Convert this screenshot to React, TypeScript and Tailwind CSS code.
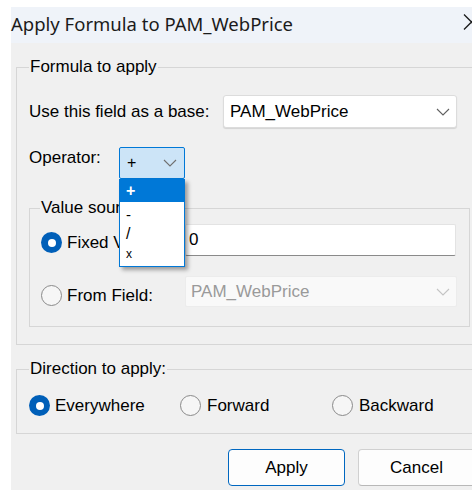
import React from "react";

function Chevron({ color = "#606060" }: { color?: string }) {
  return (
    <svg width="14" height="8" viewBox="0 0 14 8" fill="none">
      <path d="M1 1 L7 7 L13 1" stroke={color} strokeWidth="1.1" />
    </svg>
  );
}

function Radio({ checked }: { checked: boolean }) {
  if (checked) {
    return (
      <span className="w-[21px] h-[21px] rounded-full bg-[#005fb8] flex items-center justify-center shrink-0">
        <span className="w-[8px] h-[8px] rounded-full bg-white" />
      </span>
    );
  }
  return (
    <span className="w-[21px] h-[21px] rounded-full border border-[#8a8a8a] bg-[#f6f6f6] shrink-0" />
  );
}

export default function App() {
  return (
    <div className="w-[472px] h-[490px] bg-white overflow-hidden font-['Liberation_Sans',Arial,sans-serif] text-[17px] text-black">
      <div className="ml-[11px] mt-[7px] w-[480px] h-[483px] bg-[#f0f0f0]">
        {/* title bar */}
        <div className="h-[36px] bg-[#eff3f9] flex items-center relative">
          <span className="font-['Noto_Sans',sans-serif] text-[18.5px] text-[#1b1b1b] leading-none pb-[1px]">
            Apply Formula to PAM_WebPrice
          </span>
          <svg
            className="absolute left-[451px] top-[7px]"
            width="20"
            height="16"
            viewBox="0 0 20 16"
            fill="none"
          >
            <path d="M2 0.5 L17 15.5 M17 0.5 L2 15.5" stroke="#1b1b1b" strokeWidth="1.3" />
          </svg>
        </div>

        <div className="pl-[5px]">
          {/* Formula to apply */}
          <fieldset className="mt-[15px] w-[470px] border border-[#d6d6d6] pl-[12px] pb-[17px]">
            <legend className="px-[1px] leading-[18px]">Formula to apply</legend>
            <div className="mt-[19px] h-[33px] flex items-center">
              <span className="w-[194px]">Use this field as a base:</span>
              <div className="w-[234px] h-[33px] bg-white border border-[#dcdcdc] rounded-[3px] shadow-[0_1px_1px_rgba(0,0,0,0.12)] flex items-center justify-between pl-[6px] pr-[6px]">
                <span>PAM_WebPrice</span>
                <Chevron />
              </div>
            </div>

            <div className="mt-[19px] h-[32px] flex items-start">
              <span className="w-[90px] pt-[2px] leading-[18px]">Operator:</span>
              <div className="relative z-10">
                <div className="w-[66px] h-[32px] bg-[#cce4f7] border border-[#0078d7] rounded-[2px] flex items-center justify-between pl-[7px] pr-[7px]">
                  <span className="text-[16px]">+</span>
                  <Chevron color="#707070" />
                </div>
                <div className="absolute left-0 top-[32px] w-[66px] h-[88px] bg-white border border-[#0078d7] shadow-[3px_3px_4px_rgba(0,0,0,0.35)] flex flex-col">
                  <div className="h-[22px] bg-[#0078d7] text-white font-bold flex items-center pl-[6px] text-[16px]">+</div>
                  <div className="h-[21px] flex items-center pl-[6px] text-[15px] pt-[5px]">-</div>
                  <div className="h-[21px] flex items-center pl-[6px] text-[16px]">/</div>
                  <div className="h-[22px] flex items-center pl-[6px] text-[12px] pb-[3px]">x</div>
                </div>
              </div>
            </div>

            {/* Value source */}
            <fieldset className="mt-[20px] w-[441px] border border-[#d6d6d6] pl-[10px] pb-[19px]">
              <legend className="px-[1px] leading-[18px]">Value source:</legend>
              <div className="mt-[7px] h-[32px] flex items-center">
                <div className="w-[145px] flex items-center gap-[5px] pl-[1px] pt-[5px]">
                  <Radio checked />
                  <span>Fixed Value:</span>
                </div>
                <div className="w-[271px] h-[32px] bg-white border border-[#e3e3e3] border-b-[#8a8a8a] rounded-[2px] flex items-center pl-[3px]">
                  <span>0</span>
                </div>
              </div>
              <div className="mt-[20px] h-[31px] flex items-center">
                <div className="w-[145px] flex items-center gap-[5px] pl-[1px] pt-[8px]">
                  <Radio checked={false} />
                  <span>From Field:</span>
                </div>
                <div className="w-[272px] h-[31px] bg-[#f9f9f9] border border-[#ececec] rounded-[2px] flex items-center justify-between pl-[5px] pr-[6px] text-[#9a9a9a]">
                  <span>PAM_WebPrice</span>
                  <Chevron color="#c4c4c4" />
                </div>
              </div>
            </fieldset>
          </fieldset>

          {/* Direction to apply */}
          <fieldset className="mt-[15px] w-[470px] border border-[#d6d6d6] pl-[12px] pb-[17px]">
            <legend className="px-[1px] leading-[18px]">Direction to apply:</legend>
            <div className="mt-[17px] h-[21px] flex items-center">
              <div className="w-[151px] flex items-center gap-[5px]">
                <Radio checked />
                <span>Everywhere</span>
              </div>
              <div className="w-[152px] flex items-center gap-[6px]">
                <Radio checked={false} />
                <span>Forward</span>
              </div>
              <div className="flex items-center gap-[6px]">
                <Radio checked={false} />
                <span>Backward</span>
              </div>
            </div>
          </fieldset>
        </div>

        {/* buttons */}
        <div className="mt-[15px] pl-[217px] flex gap-[13px]">
          <button className="w-[117px] h-[37px] bg-[#fdfdfd] border border-[#0067c0] rounded-[4px] flex items-center justify-center">
            Apply
          </button>
          <button className="w-[117px] h-[37px] bg-[#fdfdfd] border border-[#d0d0d0] border-b-[#b8b8b8] rounded-[4px] flex items-center justify-center">
            Cancel
          </button>
        </div>
      </div>
    </div>
  );
}
